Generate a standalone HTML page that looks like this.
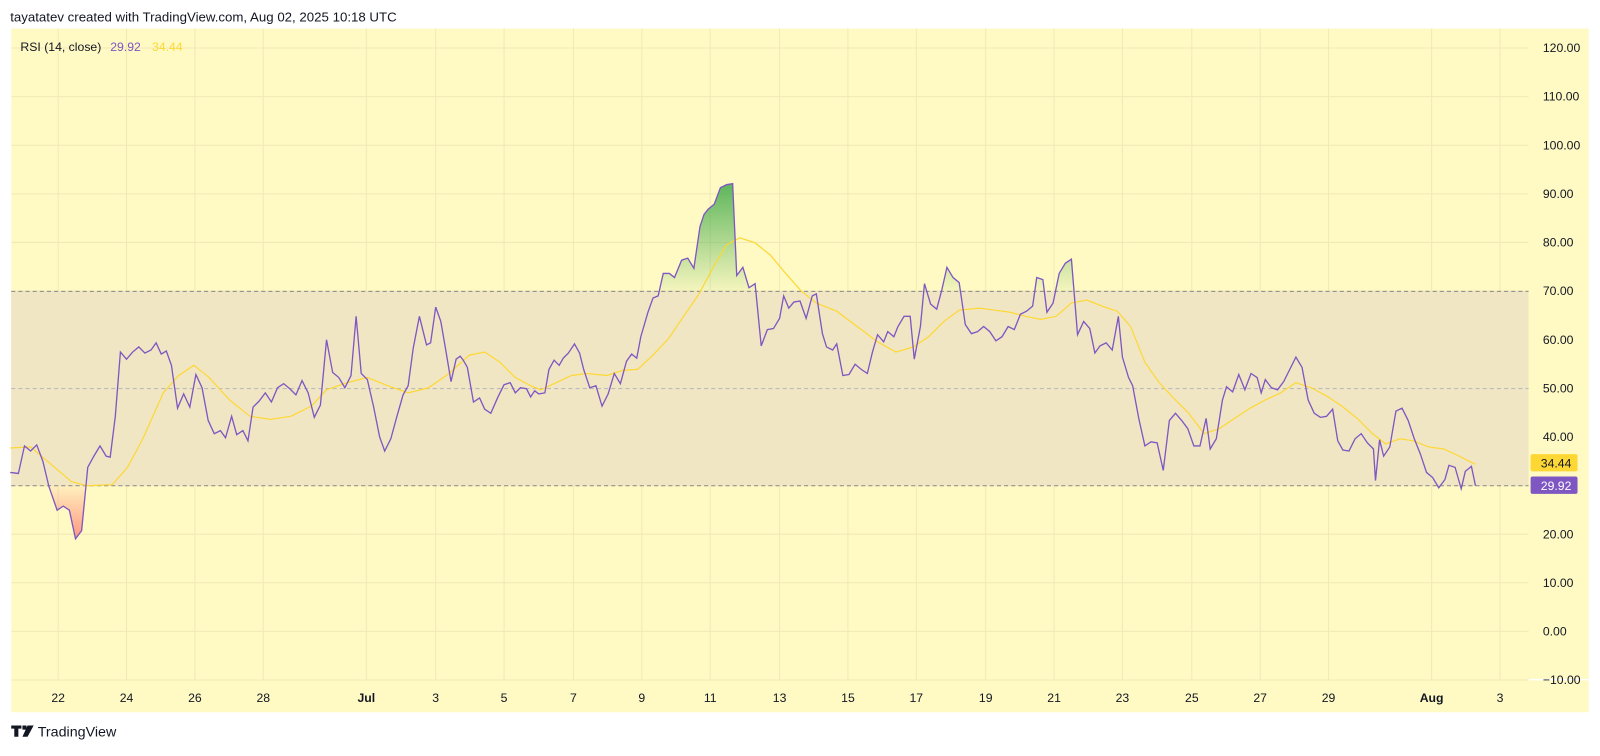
<!DOCTYPE html>
<html><head><meta charset="utf-8"><style>
html,body{margin:0;padding:0;background:#fff;overflow:hidden;width:1600px;height:751px}
#w{position:absolute;left:0;top:0;width:1568px;height:736px;transform:scale(1.0204);transform-origin:0 0;font-family:"Liberation Sans","DejaVu Sans",sans-serif}
</style></head><body><div id="w">
<svg width="1568" height="736" xmlns="http://www.w3.org/2000/svg" font-family="Liberation Sans, DejaVu Sans, sans-serif">
<defs>
<linearGradient id="gg" x1="0" y1="180" x2="0" y2="286" gradientUnits="userSpaceOnUse"><stop offset="0" stop-color="#4caf50" stop-opacity="0.9"/><stop offset="1" stop-color="#4caf50" stop-opacity="0.05"/></linearGradient>
<linearGradient id="rg" x1="0" y1="476" x2="0" y2="530" gradientUnits="userSpaceOnUse"><stop offset="0" stop-color="#ff5252" stop-opacity="0.05"/><stop offset="1" stop-color="#ff5252" stop-opacity="0.6"/></linearGradient>
<clipPath id="top"><rect x="0" y="0" width="1500" height="285.5"/></clipPath>
<clipPath id="bot"><rect x="0" y="476" width="1500" height="300"/></clipPath>
</defs>
<text x="10" y="21" font-size="13" fill="#131722">tayatatev created with TradingView.com, Aug 02, 2025 10:18 UTC</text>
<rect x="11" y="28" width="1546" height="670" fill="#fff9c4"/>
<g id="grid" stroke="#f0e9b6" stroke-width="1"></g>
<rect x="11" y="285.5" width="1487" height="190.5" fill="#f1e6c4"/>
<g stroke="#888" stroke-dasharray="4,3" stroke-width="1"><line x1="11" x2="1498" y1="285.5" y2="285.5"/><line x1="11" x2="1498" y1="380.8" y2="380.8" stroke="#bbb"/><line x1="11" x2="1498" y1="476" y2="476"/></g>
<line x1="1498" x2="1557" y1="666" y2="666" stroke="#fff" stroke-width="1.5"/>
<g id="fills"></g>
<path id="ma" fill="none" stroke="#fdd835" stroke-width="1.2"/>
<path id="rsi" fill="none" stroke="#7e57c2" stroke-width="1.3"/>
<text x="20" y="50" font-size="12" fill="#131722">RSI (14, close)</text>
<text x="108" y="50" font-size="12" fill="#7e57c2">29.92</text>
<text x="149" y="50" font-size="12" fill="#fdd835">34.44</text>
<g id="ylab" font-size="12" fill="#131722"></g>
<rect x="1500" y="445" width="46" height="17" rx="2" fill="#fdd835"/>
<text x="1510" y="458" font-size="12" fill="#131722">34.44</text>
<rect x="1500" y="467" width="46" height="17" rx="2" fill="#7e57c2"/>
<text x="1510" y="480" font-size="12" fill="#fff">29.92</text>
<g id="xlab" font-size="12" fill="#131722" text-anchor="middle"></g>
<g transform="translate(11,711)"><path d="M0 0h10v3h-3v8h-4v-8h-3z M11 0h4v4h-4z M16 0h6l-6 11h-5z" fill="#131722"/></g>
<text x="37" y="722" font-size="14" fill="#131722">TradingView</text>
</svg></div>
<script>
var NS="http://www.w3.org/2000/svg";
function el(p,t,a,txt){var e=document.createElementNS(NS,t);for(var k in a)e.setAttribute(k,a[k]);if(txt)e.textContent=txt;p.appendChild(e);return e;}
var xs=[[57,"22"],[124,"24"],[191,"26"],[258,"28"],[359,"Jul",1],[427,"3"],[494,"5"],[562,"7"],[629,"9"],[696,"11"],[764,"13"],[831,"15"],[898,"17"],[966,"19"],[1033,"21"],[1100,"23"],[1168,"25"],[1235,"27"],[1302,"29"],[1403,"Aug",1],[1470,"3"]];
var g=document.getElementById("grid"),xl=document.getElementById("xlab"),yl=document.getElementById("ylab");
xs.forEach(function(d){el(g,"line",{x1:d[0],x2:d[0],y1:28,y2:666});var t=el(xl,"text",{x:d[0],y:688},d[1]);if(d[2])t.setAttribute("font-weight","bold");});
for(var v=120;v>=-10;v-=10){var y=47+(120-v)*4.765;el(g,"line",{x1:11,x2:1498,y1:y,y2:y});el(yl,"text",{x:1512,y:y+4},v.toFixed(2).replace("-","−"));}
var r=[10,463,18,464,24,437,30,442,36,436,42,452,48,477,56,500,62,496,68,500,74,528,80,520,86,458,92,447,98,437,104,447,108,448,113,408,118,345,124,352,130,345,136,340,142,346,148,343,153,336,158,347,163,344,168,358,174,400,180,386,186,399,192,367,198,380,204,412,210,425,216,422,221,429,227,408,232,426,238,422,243,432,248,399,254,393,260,385,266,394,272,380,278,376,284,381,290,387,296,373,302,385,308,409,314,397,320,333,326,365,332,370,338,380,344,368,349,310,354,366,360,372,366,398,372,428,377,442,383,430,389,408,395,387,400,378,405,341,411,310,418,338,422,336,427,301,432,315,437,344,442,374,447,352,451,349,454,353,458,360,464,394,470,390,475,401,481,405,488,389,494,377,500,375,505,385,510,380,516,381,520,389,524,383,528,386,534,385,538,362,543,353,548,358,552,351,557,346,563,337,568,346,572,362,578,380,584,378,590,398,596,386,602,366,608,376,614,354,619,347,624,351,628,330,635,306,640,292,645,290,650,268,656,268,661,272,668,255,674,253,680,263,686,222,690,210,694,205,700,200,706,184,712,181,718,180,722,270,728,262,734,282,740,278,746,339,752,323,758,322,764,312,768,290,773,302,778,296,784,295,790,312,796,290,800,288,806,327,810,340,816,343,820,337,826,368,832,367,838,357,844,362,850,366,855,345,860,328,866,335,870,325,876,330,880,320,886,310,892,310,896,352,902,320,906,278,912,298,918,303,923,284,928,262,934,272,940,277,946,318,952,327,958,325,964,320,970,325,976,334,982,330,988,320,994,323,1000,308,1006,305,1012,300,1016,272,1022,274,1026,306,1032,297,1038,268,1044,258,1050,254,1056,328,1062,315,1068,322,1073,346,1078,339,1084,336,1090,343,1096,310,1100,350,1106,370,1110,378,1116,410,1122,437,1128,433,1134,434,1140,461,1146,412,1152,405,1158,412,1164,420,1170,437,1176,437,1182,410,1186,440,1192,430,1198,392,1202,379,1208,384,1214,367,1220,382,1226,366,1232,370,1236,385,1240,372,1246,380,1252,382,1258,374,1264,362,1270,350,1276,360,1282,392,1288,405,1294,409,1300,408,1306,401,1311,432,1316,441,1322,442,1328,430,1334,425,1340,434,1346,440,1348,471,1352,431,1356,447,1362,438,1368,403,1374,400,1380,412,1386,430,1392,445,1398,463,1404,468,1410,478,1416,470,1420,456,1426,458,1432,479,1436,462,1442,457,1446,476];
var m=[10,439,30,438,50,455,70,472,85,476,110,475,125,458,140,430,160,385,175,368,190,358,205,370,225,392,245,408,265,411,285,408,305,398,320,382,340,375,360,370,380,378,400,385,420,380,440,366,460,348,475,345,490,355,505,370,520,378,530,382,545,375,560,368,575,366,595,368,610,363,625,362,640,348,655,332,670,310,685,288,700,260,712,240,725,233,740,238,755,250,770,268,785,285,800,297,820,305,840,320,860,335,878,345,895,340,910,330,925,315,940,304,960,302,975,304,990,306,1005,310,1020,313,1035,310,1050,297,1065,294,1080,300,1095,305,1108,320,1122,355,1136,375,1150,390,1165,405,1180,425,1195,420,1210,410,1225,400,1240,392,1255,385,1270,375,1285,380,1300,388,1315,398,1330,410,1345,425,1358,435,1372,430,1385,432,1400,438,1415,440,1430,447,1446,455];
function pd(a){var s="M"+a[0]+" "+a[1];for(var i=2;i<a.length;i+=2)s+=" L"+a[i]+" "+a[i+1];return s;}
var rp=pd(r);
document.getElementById("rsi").setAttribute("d",rp);
document.getElementById("ma").setAttribute("d",pd(m));
var f=document.getElementById("fills");
el(f,"path",{d:rp+" L1446 285.5 L10 285.5 Z",fill:"url(#gg)","clip-path":"url(#top)"});
el(f,"path",{d:rp+" L1446 476 L10 476 Z",fill:"url(#rg)","clip-path":"url(#bot)"});
</script>
</body></html>
